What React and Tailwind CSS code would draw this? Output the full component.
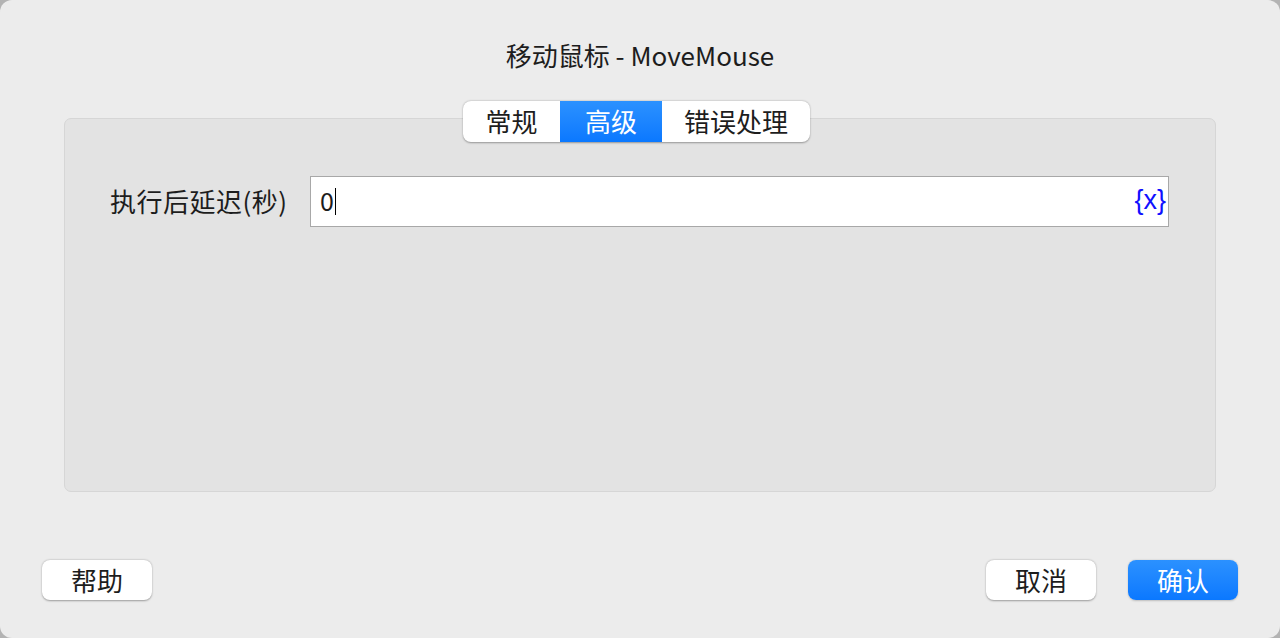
export default function App() {
  const font = { fontFamily: '"PingFang SC", "Noto Sans CJK SC", "Noto Sans", sans-serif' }
  return (
    <div className="w-[1280px] h-[638px] bg-[#b3b3b3]" style={font}>
      <div className="w-full h-full rounded-[12px] bg-[#ececec] flex flex-col text-[#1d1d1d]">
        <div className="h-[118px] pt-[36px] text-center text-[26px] leading-[38px]">移动鼠标 - MoveMouse</div>

        <div className="relative mx-[64px] h-[374px] rounded-[7px] bg-[#e3e3e3] border border-[#d6d6d6]">
          <div className="absolute left-[398px] top-[-18px] flex h-[41px] rounded-[8px] bg-white shadow-[0_0.5px_2px_rgba(0,0,0,0.35)] overflow-hidden text-[26px]">
            <div className="w-[97px] flex items-center justify-center pb-[3px]">常规</div>
            <div className="w-[102px] flex items-center justify-center pb-[3px] text-white bg-gradient-to-b from-[#2b91ff] to-[#0a78ff]">高级</div>
            <div className="w-[148px] flex items-center justify-center pb-[3px]">错误处理</div>
          </div>

          <div className="flex items-center pt-[57px] pl-[45px] pr-[46px]">
            <div className="w-[200px] text-[26px] tracking-[0.5px] pb-[2px]">执行后延迟(秒)</div>
            <div className="flex-1 h-[51px] bg-white border border-[#a8a8a8] flex items-center pl-[9px] pr-[2px]">
              <span className="text-[25px] pb-[2px]">0</span>
              <span className="w-[1.5px] h-[27px] bg-black ml-[1px]"></span>
              <span className="ml-auto text-[27px] text-[#1010ff] pb-[2px]" style={{ fontFamily: '"Liberation Sans", sans-serif' }}>{'{x}'}</span>
            </div>
          </div>
        </div>

        <div className="flex items-center px-[42px] mt-[68px]">
          <button className="w-[110px] h-[40px] pb-[3px] rounded-[8px] bg-white shadow-[0_0.5px_2px_rgba(0,0,0,0.35)] text-[26px]">帮助</button>
          <div className="flex-1"></div>
          <button className="w-[110px] h-[40px] pb-[3px] rounded-[8px] bg-white shadow-[0_0.5px_2px_rgba(0,0,0,0.35)] text-[26px]">取消</button>
          <button className="ml-[32px] w-[110px] h-[40px] pb-[3px] rounded-[8px] bg-gradient-to-b from-[#2b91ff] to-[#0a78ff] text-white shadow-[0_0.5px_2px_rgba(0,0,0,0.2)] text-[26px]">确认</button>
        </div>
      </div>
    </div>
  )
}
